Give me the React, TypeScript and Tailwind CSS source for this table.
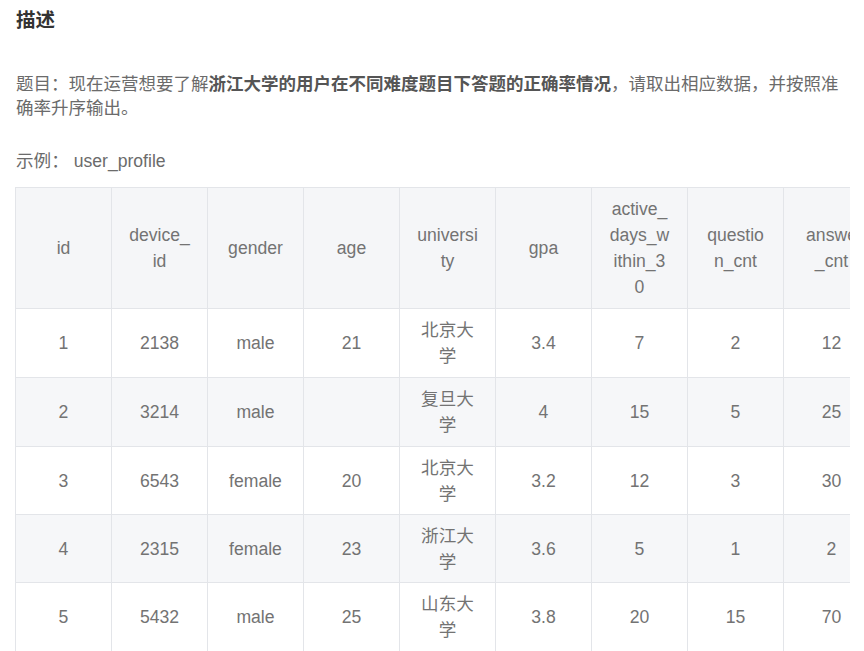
import React from "react";

const headers: string[][] = [
  ["id"],
  ["device_", "id"],
  ["gender"],
  ["age"],
  ["universi", "ty"],
  ["gpa"],
  ["active_", "days_w", "ithin_3", "0"],
  ["questio", "n_cnt"],
  ["answe", "_cnt"],
];

const rows: string[][][] = [
  [["1"], ["2138"], ["male"], ["21"], ["北京大", "学"], ["3.4"], ["7"], ["2"], ["12"]],
  [["2"], ["3214"], ["male"], [""], ["复旦大", "学"], ["4"], ["15"], ["5"], ["25"]],
  [["3"], ["6543"], ["female"], ["20"], ["北京大", "学"], ["3.2"], ["12"], ["3"], ["30"]],
  [["4"], ["2315"], ["female"], ["23"], ["浙江大", "学"], ["3.6"], ["5"], ["1"], ["2"]],
  [["5"], ["5432"], ["male"], ["25"], ["山东大", "学"], ["3.8"], ["20"], ["15"], ["70"]],
];

const rowHeights = ["h-[69px]", "h-[69px]", "h-[68px]", "h-[68px]", "h-[69px]"];

function Lines({ lines }: { lines: string[] }) {
  return (
    <>
      {lines.map((l, i) => (
        <div key={i} className="whitespace-nowrap h-[26px]">
          {l}
        </div>
      ))}
    </>
  );
}

export default function App() {
  return (
    <div
      className="bg-white min-h-[651px] w-[864px] overflow-hidden"
      style={{ fontFamily: '"Liberation Sans", "Noto Sans CJK SC", sans-serif' }}
    >
      <div className="pl-[16px]">
        <div className="mt-[6px] text-[19.5px] leading-[28px] font-bold text-[#333333]">描述</div>
        <div className="mt-[38px] text-[17.5px] leading-[24px] text-[#6b6b6b] whitespace-nowrap">
          题目：现在运营想要了解
          <span className="font-bold text-[#555555]">浙江大学的用户在不同难度题目下答题的正确率情况</span>
          ，请取出相应数据，并按照准
          <br />
          确率升序输出。
        </div>
        <div className="mt-[29px] text-[17.6px] leading-[24px] text-[#6b6b6b]">示例： user_profile</div>
      </div>
      <div className="mt-[14px] ml-[15px] w-[835px] overflow-hidden">
        <table className="border-collapse table-fixed w-[865px] text-[17.6px] leading-[26px] text-[#737373]">
          <colgroup>
            {headers.map((_, i) => (
              <col key={i} className="w-[96px]" />
            ))}
          </colgroup>
          <thead>
            <tr className="bg-[#f5f6f8]">
              {headers.map((h, i) => (
                <th
                  key={i}
                  className="border border-[#e3e5e9] font-normal text-center align-middle py-[8px] px-0 h-[121px]"
                >
                  <Lines lines={h} />
                </th>
              ))}
            </tr>
          </thead>
          <tbody>
            {rows.map((r, ri) => (
              <tr key={ri} className={ri % 2 === 1 ? "bg-[#f6f7f9]" : "bg-white"}>
                {r.map((c, ci) => (
                  <td
                    key={ci}
                    className={`border border-[#e3e5e9] text-center align-middle py-[7px] px-0 ${rowHeights[ri]}`}
                  >
                    <Lines lines={c} />
                  </td>
                ))}
              </tr>
            ))}
          </tbody>
        </table>
      </div>
    </div>
  );
}
